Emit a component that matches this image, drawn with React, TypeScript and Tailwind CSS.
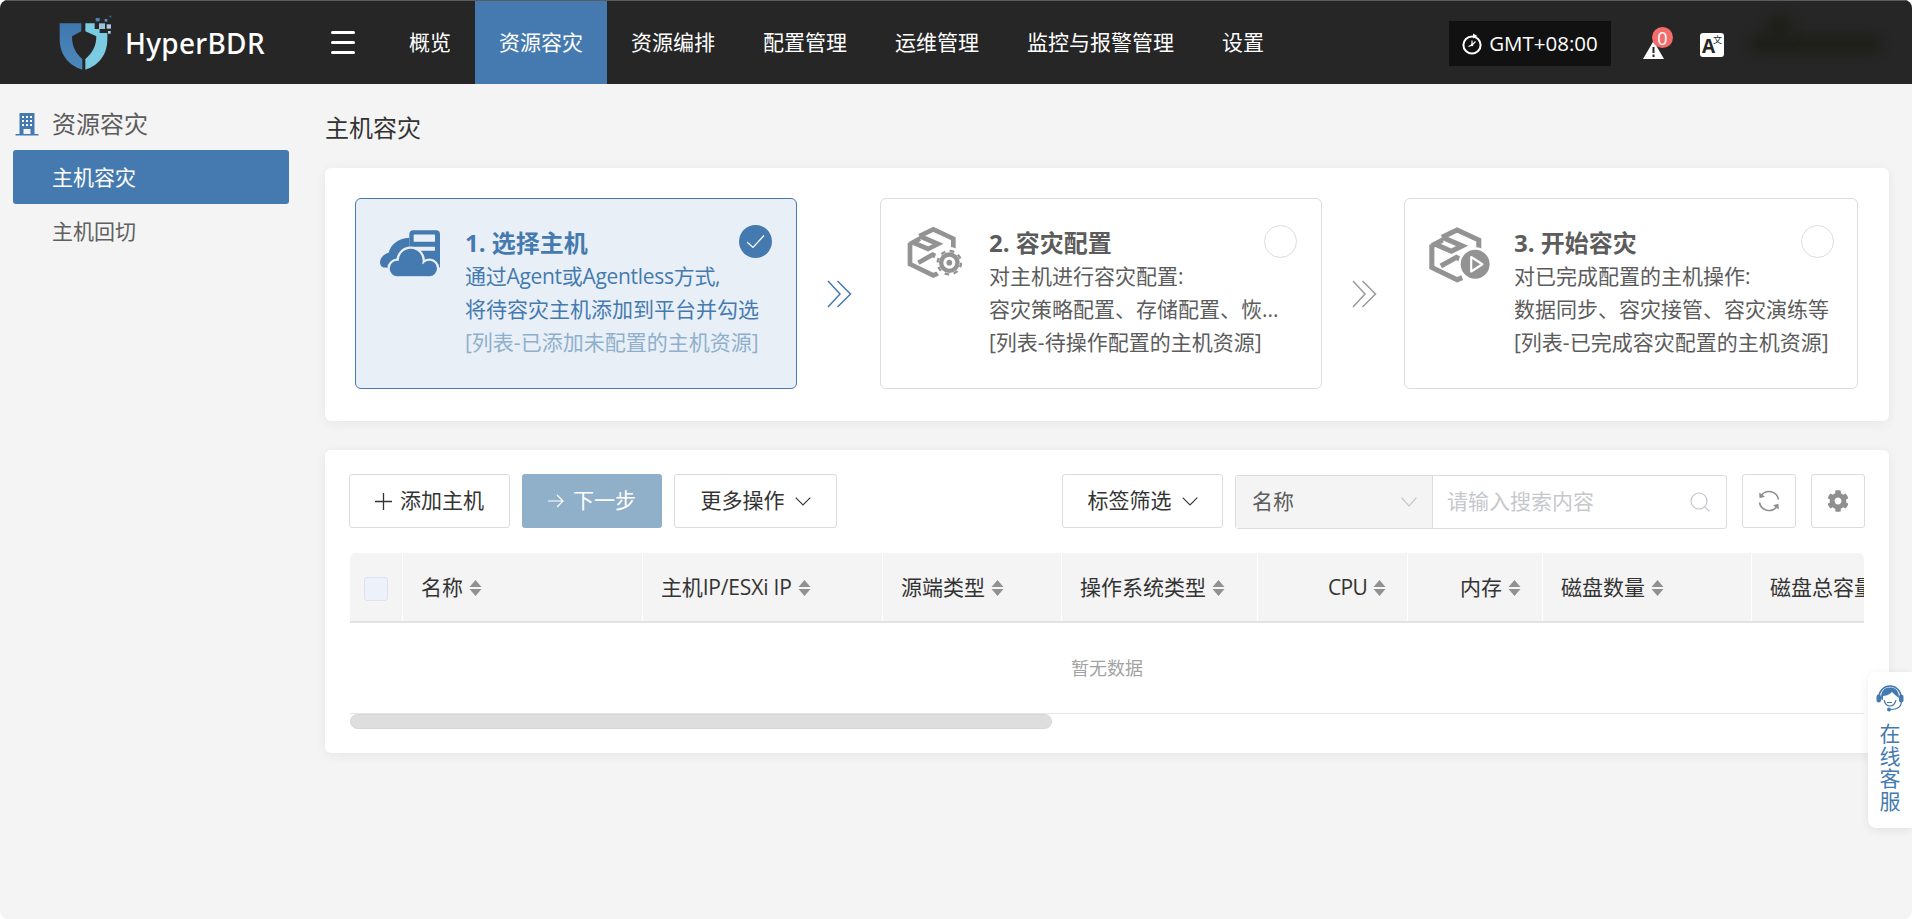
import React from "react";
import { Search } from "lucide-react";
import { FaCog } from "react-icons/fa";

const nav = ["概览", "资源容灾", "资源编排", "配置管理", "运维管理", "监控与报警管理", "设置"];

function Logo() {
  return (
    <svg width="56" height="57" viewBox="55 40 168 171" className="shrink-0">
      <defs>
        <linearGradient id="lg" x1="0" x2="0" y1="0" y2="1">
          <stop offset="0" stopColor="#3f78b0" />
          <stop offset="1" stopColor="#4d88ba" />
        </linearGradient>
      </defs>
      <path d="M60 68H125V92L97 107C97 140 110 160 128 175V207C90 195 60 165 60 115Z" fill="url(#lg)" />
      <path d="M137 68H165V85H180V97H203V115C203 165 175 195 137 207V175C155 160 170 140 170 107L137 92Z" fill="#7bcbe3" />
      <rect x="168" y="52" width="12" height="10" fill="#4a82b8" />
      <rect x="195" y="55" width="8" height="8" fill="#5c93c4" />
      <rect x="209" y="45" width="6" height="5" fill="#2f6ca6" />
      <rect x="178" y="68" width="18" height="17" fill="#9cc3e0" />
      <rect x="201" y="71" width="13" height="13" fill="#a9c9e4" />
      <rect x="205" y="91" width="8" height="8" fill="#b5d2e8" />
    </svg>
  );
}

function CloudServer() {
  const bg = "#e8eff6";
  return (
    <svg width="60" height="47" viewBox="120 120 180 140" className="shrink-0">
      <path d="M208 143C172 145 152 165 146 188C124 194 112 216 126 230C134 235 150 234 160 234L208 200Z" fill="#457ab0" />
      <path d="M208 132Q208 120 220 120H288Q300 120 300 132V232H208Z" fill="#457ab0" />
      <rect x="221" y="133" width="64" height="22" rx="2" fill={bg} />
      <rect x="221" y="170" width="64" height="12" rx="2" fill={bg} />
      <g fill={bg} stroke={bg} strokeWidth="14">
        <circle cx="212" cy="212" r="36" />
        <circle cx="172" cy="235" r="23" />
        <circle cx="268" cy="235" r="23" />
      </g>
      <g fill="#457ab0">
        <circle cx="212" cy="212" r="36" />
        <circle cx="172" cy="235" r="23" />
        <circle cx="268" cy="235" r="23" />
        <rect x="172" y="222" width="96" height="36" />
      </g>
    </svg>
  );
}

function BoxLines() {
  return (
    <g fill="none" stroke="#939393" strokeWidth="14" strokeLinejoin="miter">
      <path d="M58 42L100 22L160 50V85" />
      <path d="M58 42L114 66L84 81L36 60" />
      <path d="M30 62V126L100 160L114 154" />
      <path d="M30 66L60 50" />
      <path d="M55 122L98 98L120 110" />
    </g>
  );
}

function GearBox() {
  return (
    <svg width="72" height="60" viewBox="0 0 216 180" className="shrink-0">
      <BoxLines />
      <circle cx="148" cy="122" r="47" fill="#fff" />
      <circle cx="148" cy="122" r="31" fill="#939393" />
      <circle cx="148" cy="122" r="35" fill="none" stroke="#939393" strokeWidth="7" strokeDasharray="14 13.480" />
      <circle cx="148" cy="122" r="18" fill="#fff" />
      <circle cx="148" cy="122" r="8.500" fill="#939393" />
    </svg>
  );
}

function PlayBox() {
  return (
    <svg width="78" height="65" viewBox="0 0 216 180" className="shrink-0">
      <BoxLines />
      <circle cx="150" cy="117" r="47" fill="#fff" />
      <circle cx="150" cy="117" r="40" fill="#939393" />
      <path d="M139 97L170 117L139 137Z" fill="#939393" stroke="#fff" strokeWidth="6" strokeLinejoin="round" />
    </svg>
  );
}

function Sort() {
  return (
    <svg width="13" height="16" viewBox="0 0 13 16" className="shrink-0 ml-[6px]">
      <path d="M6.5 0L12.5 7H.5Z M6.5 16L.5 9H12.5Z" fill="#919191" />
    </svg>
  );
}

function Clock() {
  return (
    <svg width="20" height="22" viewBox="0 0 20 22" className="shrink-0">
      <circle cx="10" cy="12" r="8.6" fill="none" stroke="#fff" strokeWidth="2" />
      <path d="M11 0.5L15.5 3L11 5.5Z" fill="#fff" />
      <path d="M10 7.5V12L6.5 13.5M13.5 8.5L10 12" stroke="#fff" strokeWidth="1.2" fill="none" />
      <circle cx="10" cy="12" r="1.3" fill="#fff" />
    </svg>
  );
}

function Headset() {
  return (
    <svg width="28" height="28" viewBox="0 0 28 28">
      <path d="M3 13A11 11 0 0 1 25 13" fill="none" stroke="#457ab0" strokeWidth="1.6" />
      <path d="M5 14C5 6 9 3.500 14 3.500S23 6 23 14C20 12 18 10 16 8C13 11 9 12 7 12V16C5.500 16 5 15 5 14Z" fill="#457ab0" />
      <rect x="0.500" y="10.500" width="4.500" height="8" rx="2.200" fill="#457ab0" />
      <rect x="23" y="10.500" width="4.500" height="8" rx="2.200" fill="#457ab0" />
      <path d="M8 16C9 20 11 22 14 22S19 20 20 16" fill="none" stroke="#457ab0" strokeWidth="1.200" />
      <path d="M25.500 18C25 23 21 25.500 15 25.500" fill="none" stroke="#457ab0" strokeWidth="1.200" />
      <circle cx="13" cy="25.500" r="2" fill="#457ab0" />
      <path d="M11 18.500H16" stroke="#457ab0" strokeWidth="1" />
    </svg>
  );
}

function Building() {
  return (
    <svg width="24" height="24" viewBox="0 0 24 24" className="shrink-0">
      <path d="M4.500 1H19.500V22H15.500V17H8.500V22H4.500Z" fill="#457ab0" />
      <path d="M0.500 22.700H23.500" stroke="#457ab0" strokeWidth="1.400" />
      <g fill="#fff">
        <rect x="7" y="4" width="2" height="2" />
        <rect x="11" y="4" width="2" height="2" />
        <rect x="15" y="4" width="2" height="2" />
        <rect x="7" y="8" width="2" height="2" />
        <rect x="11" y="8" width="2" height="2" />
        <rect x="15" y="8" width="2" height="2" />
        <rect x="7" y="12" width="2" height="2" />
        <rect x="11" y="12" width="2" height="2" />
        <rect x="15" y="12" width="2" height="2" />
      </g>
    </svg>
  );
}

function Chevron({ color = "#333", w = 16, h = 9 }: { color?: string; w?: number; h?: number }) {
  return (
    <svg width={w} height={h} viewBox="0 0 16 9" preserveAspectRatio="none" className="shrink-0">
      <path d="M.7.7L8 8L15.300.7" fill="none" stroke={color} strokeWidth="1.100" />
    </svg>
  );
}

function PlusIcon() {
  return (
    <svg width="17" height="17" viewBox="0 0 17 17" className="shrink-0">
      <path d="M8.500 0V17M0 8.500H17" stroke="#333" strokeWidth="1.300" />
    </svg>
  );
}

function ArrowIcon() {
  return (
    <svg width="16" height="14" viewBox="0 0 16 14" className="shrink-0">
      <path d="M0 7H15M9 1L15 7L9 13" fill="none" stroke="#fff" strokeWidth="1.200" />
    </svg>
  );
}

function Refresh() {
  return (
    <svg width="22" height="22" viewBox="0 0 22 22">
      <g fill="none" stroke="#8f8f8f" strokeWidth="1.600">
        <path d="M20.500 9.500A9.700 9.700 0 0 0 3.500 5" />
        <path d="M1.500 12.500A9.700 9.700 0 0 0 18.500 17" />
      </g>
      <path d="M1.200 2.500L7 6.800L1.500 8.200Z M20.800 19.500L15 15.200L20.500 13.800Z" fill="#8f8f8f" />
    </svg>
  );
}

function Double({ color }: { color: string }) {
  return (
    <svg width="25" height="28" viewBox="0 0 25 28" className="shrink-0">
      <path d="M1 1L13 14L1 27M10.500 1L23.500 14L10.500 27" fill="none" stroke={color} strokeWidth="1.500" />
    </svg>
  );
}

function StepCard(p: {
  w: string;
  icon: React.ReactNode;
  iconBox: string;
  title: string;
  lines: string[];
  active?: boolean;
  circleGap: string;
}) {
  const a = p.active;
  return (
    <div
      className={`${p.w} relative h-[191px] shrink-0 rounded-[6px] border flex ${
        a ? "border-[#457ab0] bg-[#e8eff6] text-[#457ab0]" : "border-[#dcdcdc] bg-white text-[#5c5c5c]"
      }`}
    >
      <div className={`${p.iconBox} shrink-0`}>{p.icon}</div>
      <div className="pt-[27px] min-w-0 grow">
        <div className="text-[24px] leading-[34px] font-bold whitespace-nowrap">{p.title}</div>
        {p.lines.map((l, i) => (
          <div
            key={l}
            className={`text-[21px] leading-[33px] whitespace-nowrap ${a && i === 2 ? "text-[#8fb0cd]" : ""} ${
              a && i === 0 ? "tracking-[-0.3px]" : ""
            }`}
          >
            {l}
          </div>
        ))}
      </div>
      <span
        className={`${p.circleGap} absolute top-[26px] w-[33px] h-[33px] rounded-full flex items-center justify-center ${
          a ? "bg-[#457ab0]" : "border border-[#dcdcdc] bg-white"
        }`}
      >
        {a && (
          <svg width="19" height="15" viewBox="0 0 19 15">
            <path d="M1 8L7 13.500L18 1.500" fill="none" stroke="#fff" strokeWidth="1.200" />
          </svg>
        )}
      </span>
    </div>
  );
}

const columns: { label: string; w: string; right?: boolean; nosort?: boolean; track?: string }[] = [
  { label: "名称", w: "w-[240px]" },
  { label: "主机IP/ESXi IP", w: "w-[240px]", track: "tracking-[-0.17px]" },
  { label: "源端类型", w: "w-[179px]" },
  { label: "操作系统类型", w: "w-[196px]" },
  { label: "CPU", w: "w-[150px]", right: true, track: "tracking-[-0.7px]" },
  { label: "内存", w: "w-[135px]", right: true },
  { label: "磁盘数量", w: "w-[209px]" },
  { label: "磁盘总容量", w: "w-[180px]", nosort: true },
];

function Btn({ className, children }: { className: string; children: React.ReactNode }) {
  return (
    <div className={`h-[54px] rounded-[3px] flex items-center justify-center text-[21px] shrink-0 ${className}`}>
      {children}
    </div>
  );
}

export default function App() {
  return (
    <div className="relative w-[1912px] h-[919px] overflow-hidden rounded-[8px] bg-[#f4f4f4] text-[#333] [font-family:'Open_Sans','Noto_Sans_CJK_SC',sans-serif]">
      {/* header */}
      <header className="h-[84px] bg-[#262626] border-t border-[#5a5a5a] flex items-stretch text-white">
        <div className="w-[331px] flex items-center pl-[58px] shrink-0">
          <Logo />
          <span className="ml-[11px] text-[28px] font-medium tracking-[0.3px] [font-family:'Noto_Sans',sans-serif]">
            HyperBDR
          </span>
        </div>
        <div className="w-[54px] shrink-0 flex items-center">
          <div className="w-[24px] flex flex-col gap-[7px]">
            <span className="h-[3px] rounded-full bg-white" />
            <span className="h-[3px] rounded-full bg-white" />
            <span className="h-[3px] rounded-full bg-white" />
          </div>
        </div>
        <nav className="flex">
          {nav.map((n) => (
            <div
              key={n}
              className={`px-[24px] pt-[1px] flex items-center text-[21px] ${n === "资源容灾" ? "bg-[#457ab0]" : ""}`}
            >
              {n}
            </div>
          ))}
        </nav>
        <div className="ml-[161px] flex items-center">
          <div className="w-[162px] h-[45px] bg-[#111] flex items-center justify-center gap-[7px] text-[20.500px] mt-[2px]">
            <Clock />
            <span>GMT+08:00</span>
          </div>
        </div>
        <div className="relative w-[85px] shrink-0 ml-[32px]">
          <svg width="21" height="18" viewBox="0 0 21 18" className="absolute left-0 top-[40px]">
            <path d="M10.500 0L21 18H0Z" fill="#fff" />
            <path d="M10.500 6V12M10.500 13.500V16" stroke="#262626" strokeWidth="2" />
          </svg>
          <span className="absolute left-[9px] top-[26px] w-[21px] h-[21px] rounded-full bg-[#f56c6c] flex items-center justify-center text-[18px] leading-none">
            0
          </span>
          <span className="absolute left-[57px] top-[32px] w-[24px] h-[24px] rounded-[3px] bg-white text-[#262626]">
            <span className="absolute left-[2px] top-[3px] text-[19px] leading-[20px] font-bold">A</span>
            <span className="absolute left-[13px] top-[2px] text-[9px] leading-[10px]">文</span>
          </span>
        </div>
        <div className="relative grow">
          <div className="absolute left-[21px] top-[33px] w-[132px] h-[20px] rounded-full bg-[#1f1f1a] blur-[5px]" />
          <div className="absolute left-[38px] top-[13px] w-[26px] h-[28px] rounded-full bg-[#1f1f1a] blur-[5px]" />
        </div>
      </header>

      <div className="flex items-start">
        {/* sidebar */}
        <aside className="w-[325px] shrink-0 pl-[13px] pr-[36px]">
          <div className="h-[66px] flex items-center pl-[2px] pt-[14px] gap-[13px] text-[24px] text-[#5c5c5c]">
            <Building />
            <span>资源容灾</span>
          </div>
          <div className="h-[54px] rounded-[3px] bg-[#457ab0] text-white text-[21px] flex items-center pl-[39px] pt-[1px]">
            主机容灾
          </div>
          <div className="h-[55px] text-[#606060] text-[21px] flex items-center pl-[39px]">主机回切</div>
        </aside>

        {/* content */}
        <main className="w-[1564px] shrink-0">
          <h1 className="pt-[28px] pb-[24px] text-[24px] leading-[32px] font-normal text-[#333]">主机容灾</h1>

          <section className="h-[253px] rounded-[6px] bg-white shadow-[0_2px_12px_rgba(0,0,0,0.06)] pl-[30px] pt-[30px] flex items-start">
            <StepCard
              active
              w="w-[442px]"
              icon={<CloudServer />}
              iconBox="pl-[24px] pt-[31px] w-[109px]"
              circleGap="right-[24px]"
              title="1. 选择主机"
              lines={["通过Agent或Agentless方式,", "将待容灾主机添加到平台并勾选", "[列表-已添加未配置的主机资源]"]}
            />
            <div className="w-[83px] h-[191px] shrink-0 flex items-center justify-center pl-[2px]">
              <Double color="#457ab0" />
            </div>
            <StepCard
              w="w-[442px]"
              icon={<GearBox />}
              iconBox="pl-[19px] pt-[23px] w-[108px]"
              circleGap="right-[24px]"
              title="2. 容灾配置"
              lines={["对主机进行容灾配置:", "容灾策略配置、存储配置、恢...", "[列表-待操作配置的主机资源]"]}
            />
            <div className="w-[82px] h-[191px] shrink-0 flex items-center justify-center pl-[2px]">
              <Double color="#9a9a9a" />
            </div>
            <StepCard
              w="w-[454px]"
              icon={<PlayBox />}
              iconBox="pl-[16px] pt-[23px] w-[109px]"
              circleGap="right-[23px]"
              title="3. 开始容灾"
              lines={["对已完成配置的主机操作:", "数据同步、容灾接管、容灾演练等", "[列表-已完成容灾配置的主机资源]"]}
            />
          </section>

          <section className="mt-[29px] h-[303px] rounded-[6px] bg-white shadow-[0_2px_12px_rgba(0,0,0,0.06)] pl-[24px] pt-[24px]">
            <div className="flex items-start">
              <Btn className="w-[161px] border border-[#dcdcdc] gap-[8px]">
                <PlusIcon />
                添加主机
              </Btn>
              <Btn className="ml-[12px] w-[140px] bg-[#90afc8] text-white gap-[9px]">
                <ArrowIcon />
                下一步
              </Btn>
              <Btn className="ml-[12px] w-[163px] border border-[#dcdcdc] gap-[10px]">
                更多操作
                <Chevron />
              </Btn>
              <Btn className="ml-[225px] w-[161px] border border-[#dcdcdc] gap-[10px]">
                标签筛选
                <Chevron />
              </Btn>
              <div className="ml-[12px] mt-[1px] w-[492px] h-[54px] flex rounded-[3px] border border-[#dcdcdc] text-[21px]">
                <div className="w-[197px] shrink-0 bg-[#f4f4f4] border-r border-[#dcdcdc] flex items-center justify-between pl-[16px] pr-[15px] text-[#5c5c5c]">
                  名称
                  <Chevron color="#c0c4cc" h={10} />
                </div>
                <div className="grow flex items-center justify-between pl-[14px] pr-[14px] text-[#c6c8cc]">
                  请输入搜索内容
                  <Search size={24} strokeWidth={1.2} color="#c0c4cc" />
                </div>
              </div>
              <Btn className="ml-[15px] w-[54px] border border-[#dcdcdc]">
                <Refresh />
              </Btn>
              <Btn className="ml-[15px] w-[54px] border border-[#dcdcdc]">
                <FaCog size={22} color="#8f8f8f" />
              </Btn>
            </div>

            <div className="mt-[24px] ml-[1px] w-[1514px] overflow-hidden">
              <div className="flex h-[70px] bg-[#f4f4f4] border-b-2 border-[#e3e3e3] rounded-t-[6px] text-[21px] text-[#333]">
                <div className="w-[53px] shrink-0 flex items-center justify-center border-r border-white pt-[3px]">
                  <span className="w-[24px] h-[24px] rounded-[3px] border border-[#dde2ec] bg-[#edf1fa]" />
                </div>
                {columns.map((c) => (
                  <div
                    key={c.label}
                    className={`${c.w} ${c.track ?? ""} shrink-0 flex items-center pt-[1px] border-r border-white whitespace-nowrap ${
                      c.right ? "justify-end pr-[21px]" : "pl-[18px]"
                    }`}
                  >
                    {c.label}
                    {!c.nosort && <Sort />}
                  </div>
                ))}
              </div>
              <div className="h-[91px] border-b border-[#e6e6e6] flex items-center justify-center text-[18px] text-[#a3a3a3]">
                暂无数据
              </div>
            </div>
            <div className="ml-[1px] w-[702px] h-[15px] rounded-full bg-[#dedede] border border-[#d6d6d6]" />
          </section>
        </main>
      </div>

      {/* floating service */}
      <div className="absolute right-0 top-[672px] w-[44px] h-[156px] rounded-l-[8px] bg-white shadow-[0_2px_10px_rgba(0,0,0,0.08)] flex flex-col items-center pt-[12px] text-[#457ab0] text-[21px] leading-[22.600px]">
        <Headset />
        <div className="mt-[10px] w-[21px] text-center">在线客服</div>
      </div>
    </div>
  );
}
